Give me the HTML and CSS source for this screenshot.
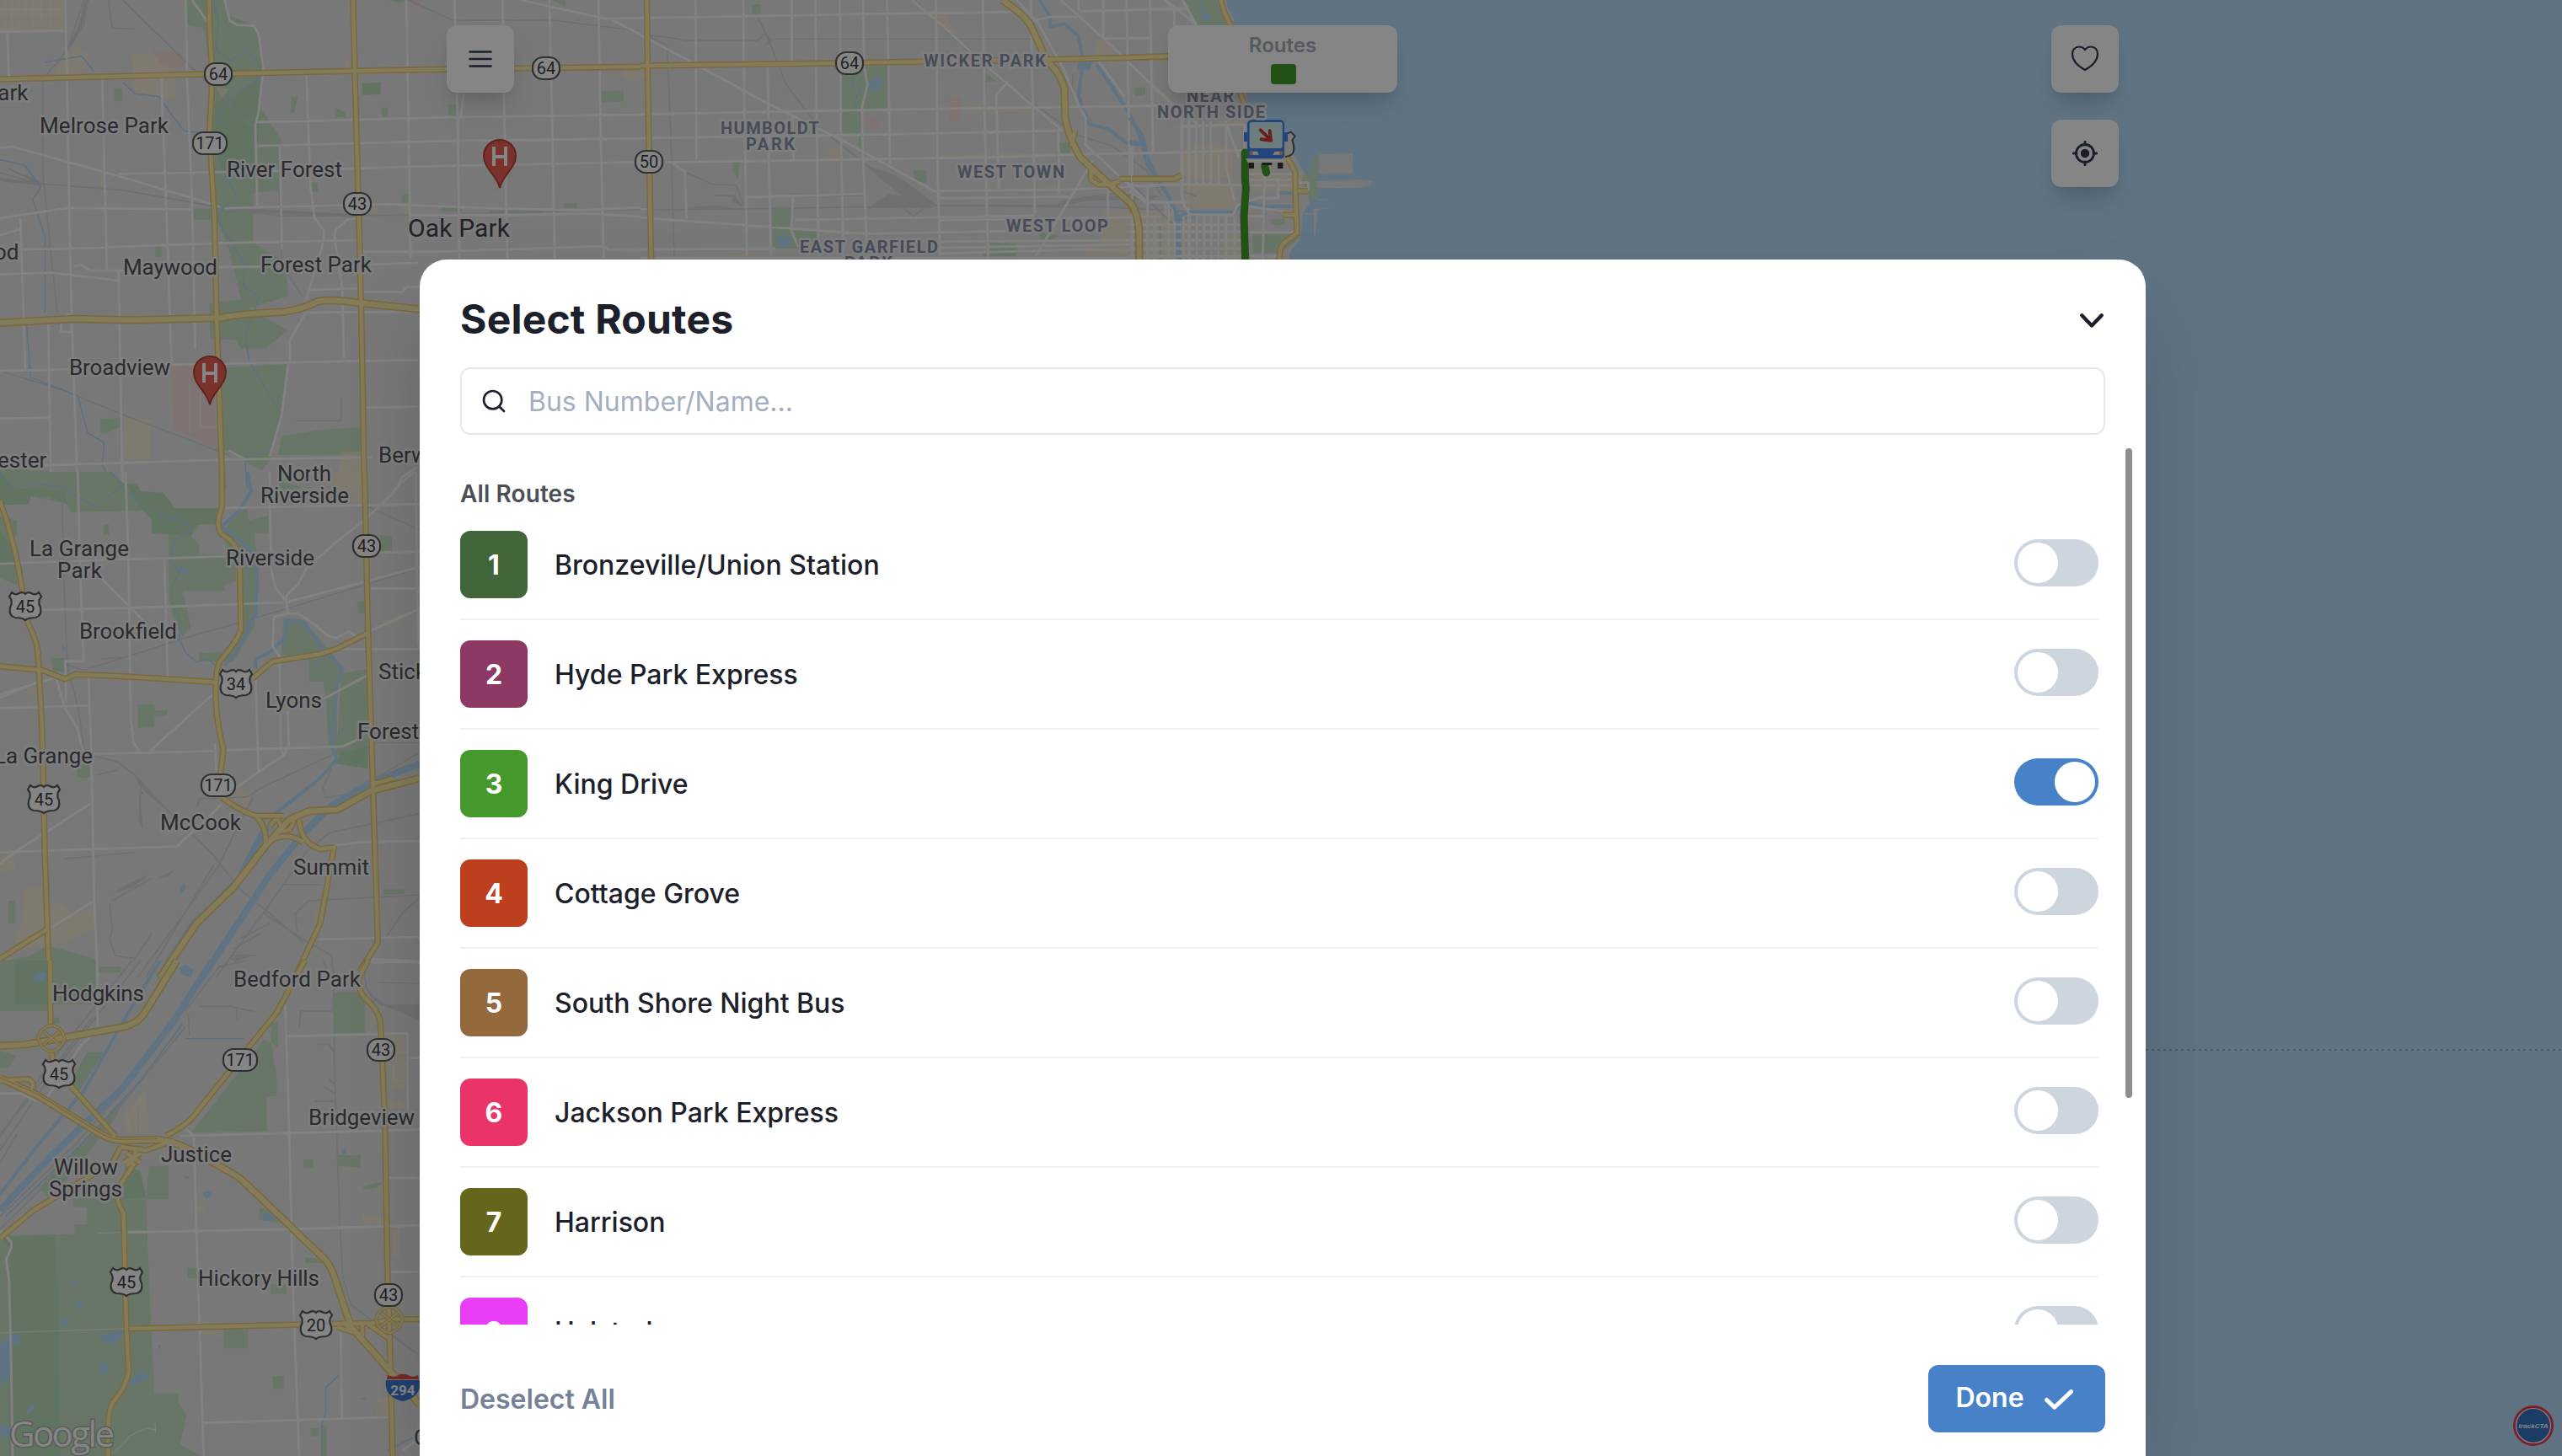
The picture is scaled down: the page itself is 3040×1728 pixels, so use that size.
FILE: index.html
```html
<!DOCTYPE html>
<html lang="en">
<head>
<meta charset="utf-8">
<title>trackCTA</title>
<link rel="stylesheet" href="styles.css">
</head>
<body>
<div class="app">
<svg class="map" viewBox="0 0 3040 1728" aria-label="Map of Chicago">
  <defs>
    <g id="us"><path d="M-16-16Q-12-12-7-15-3-17 0-14 3-17 7-15 12-12 16-16L19-11Q14-5 18 2 20 12 12 14 4 14 0 17-4 14-12 14-20 12-18 2-14-5-19-11Z"/></g>
    <g id="oval"><rect x="-16" y="-13" width="32" height="26" rx="12"/></g>
    <g id="wide"><rect x="-20" y="-13" width="40" height="26" rx="12"/></g>
    <g id="pin"><path class="pin" d="M0 29C-3 14-19 6-19-9A19 19 0 0 1 19-9C19 6 3 14 0 29Z"/><path class="pin-h" d="M-7-20V3M7-20V3M-7-8H7"/></g>
    <g id="clover"><path d="M-16 0Q-12-14 0-15 12-14 16 0 12 14 0 16-12 14-16 0ZM-10-8L10 8M10-8L-10 8"/></g>
  </defs>
  <rect class="land" width="3040" height="1728"/>

  <!-- Oak Park and western suburbs -->
  <g transform="scale(.4847 .3699)">
    <path class="park" d="M456 0H550L560 50 628 85 645 220 635 340 690 450 680 610 620 620V780L700 840 705 950 610 990 705 1060 650 1118H590L575 1090H515L512 975 590 960 560 800 530 700 520 300 500 90 456 80ZM545 1180L705 1168 690 1330 660 1480 640 1510 545 1440ZM690 1400L780 1380 890 1370V1460H680ZM470 670H530V705H470ZM0 1505L120 1510 115 1568H0ZM280 285H300V325H280ZM712 310H730L720 362H712ZM820 345L845 360V375H822ZM935 345H950V375H935ZM1098 335H1122V370H1098ZM760 585H778V615H760ZM985 625H1000V650H985ZM1470 293L1527 290V325L1472 330ZM1380 652H1412V668H1380ZM1080 665H1130V680H1080ZM1200 675H1330V685H1200ZM380 790H395V825H380ZM245 1345L300 1340V1365L260 1390H245ZM950 0H1000L980 10ZM1350 0H1385V22Z"/>
    <path class="park-dark" d="M525 330L570 310 630 250 640 330 625 540 540 545 522 420ZM887 267L932 265V303L887 305Z"/>
    <path class="shop" d="M0 0H158V98L0 100ZM160 170L190 150 213 175V235L130 240ZM322 165L370 180 430 220V315L330 300ZM530 280L560 285 540 320ZM845 190H858V235H845ZM1523 225H1568V252L1526 250ZM140 510L250 540 260 610H250L245 550ZM915 640L925 685H835V660ZM980 655L1020 645 995 685ZM835 1450H885V1568H820ZM303 1340L368 1345V1475H300Z"/>
    <path class="med" d="M370 158L440 170 460 210 430 220 400 215ZM420 1175L520 1165 532 1440 425 1375ZM1000 0H1035L1025 25ZM1210 560L1222 610 1210 612Z"/>
    <path class="rail" d="M215 0L205 80 165 160 105 255V560L130 880 140 1000M205 0L165 160M265 0L275 90 330 93M300 0L460 205 620 410 680 500 690 850 740 950M0 580L105 590 300 610 560 670 690 693 1000 690 1568 672M0 555L100 590 20 540M0 1190L150 1250 300 1330 560 1460M1000 0L1110 66 1350 64 1568 100M835 1275V1350H725M105 590L60 560"/>
    <path class="rail-wide" d="M212 0L195 90 170 150M0 575L105 592M560 672L870 692"/>
    <path class="stream" d="M520 0L535 60 530 160 560 195 600 165 640 210 630 260 560 310 530 400M530 650L535 710 600 850 595 920 635 950 600 1080 610 1160 690 1330 660 1440 600 1480 605 1568M110 200L200 180 230 230M300 263L330 300 390 310 410 350 450 420 520 430M0 512L60 530 100 600 80 640 110 760V1000M65 1040L75 1210 190 1270 215 1390 255 1420 250 1490 280 1568M545 545L580 630 530 690"/>
    <path class="road" d="M0 102L158 98M160 0L165 330 170 700 175 1000 190 1568M18 105L22 250M455 0L458 250 470 640 478 1120M250 255L262 870M395 250L408 700 420 1170M750 235L760 600 770 700 793 740 793 770 750 960M470 0L508 70M550 0L562 65 580 80 622 83 633 110 645 220 633 360 625 400 630 660M995 0L1000 400 1005 830M1113 0L1120 370 1125 830M1135 300L1128 375M1230 0L1235 400 1242 830M1345 0L1352 400 1358 830M1465 0L1470 400 1478 830M628 392L1110 376 1568 368M628 468L1100 452 1568 444M290 558L640 550 1000 535 1568 520M0 475L30 470 290 565 470 635 540 665M0 700L170 667 470 672M550 668L720 662 950 655 1200 668 1420 675 1568 665M1000 690L1250 690 1440 685 1568 695M0 802L175 797 540 780 875 770M885 808L1060 808 1480 790 1490 802 1568 803M530 857L700 855M890 850L1025 843M0 880L125 875 290 900M180 853L200 850 220 868 300 868M760 930L888 925 890 937 985 937 995 922 1025 920M750 1003L1025 1000M820 770V740L850 705 875 700M820 770L838 925 842 1150M0 1190L170 1185M420 1170L890 1158 1025 1155M0 1343L125 1340M890 1308L1025 1305M60 1495L540 1475 910 1467M290 870L300 1568M118 1040L125 1568M50 700L62 1190M0 755L50 735M685 470L690 800M705 1170L690 1330 660 1465M750 1000L710 1090V1170M560 1445L600 1475M970 1568L985 1530 1020 1500M1275 0L1480 60 1568 58M1500 65L1568 110M145 1065H175V1035M150 1065V1030L170 1005"/>
    <path class="lane" d="M12 0V95M28 0V95M45 0V95M62 0V60M80 0V95M100 0V60M125 0V95M0 30H158M0 48H158M465 1210V1390M490 1200V1370H530V1290"/>
    <g class="case"><path d="M0 254L500 238 1000 224 1568 214M512 0L513 90 518 200V300L513 420 518 540 525 700 530 1000 535 1200 540 1400 545 1568M864 0L870 300 880 760 886 1100 892 1568"/></g>
    <g class="case-wide"><path d="M0 1036L180 1023 330 1027 540 1020Q580 1007 700 1000 745 990 780 966 820 960 880 972L1100 1002"/></g>
    <g class="major"><path d="M0 254L500 238 1000 224 1568 214M512 0L513 90 518 200V300L513 420 518 540 525 700 530 1000 535 1200 540 1400 545 1568M864 0L870 300 880 760 886 1100 892 1568"/></g>
    <g class="major-wide"><path d="M0 1036L180 1023 330 1027 540 1020Q580 1007 700 1000 745 990 780 966 820 960 880 972L1100 1002"/></g>
  </g>

  <!-- La Grange to Summit -->
  <g transform="translate(0 560) scale(.33333 .38265)">
    <path class="park" d="M0 0H400L440 35H490L500 60 580 70 620 112 780 112V160H715L680 200 710 225V255L840 260V340L800 350V370H650L680 480 650 510 630 480 600 400V195L540 190V150L510 120 250 125 240 100 110 75 100 100 0 103ZM840 120L880 115 885 150 955 135V190H905L920 300 905 480 830 590H790L710 585V562L790 560 860 490V310L790 200ZM0 140L60 150V195L30 205 60 290V350L0 330ZM1010 458L1080 460 1180 560 1220 610 1200 680V880L1170 840 1160 700 1150 650H1100V580L1000 570ZM1215 625L1310 610V920L1195 905ZM490 722L550 720V740L595 738V755L550 760V793H490ZM180 577H228V620H190ZM272 905H320V948H275ZM1355 195L1395 200V245L1355 248ZM1365 1295H1440V1310H1365ZM30 1330H55V1400H30ZM0 1520L110 1500 170 1470 340 1510 345 1568H0ZM350 1535H430V1550H350ZM368 163H388V195H368ZM990 30L1070 45 1060 55H1000ZM1270 405L1300 400V440H1275Z"/>
    <path class="park-dark" d="M0 0L50 50 230 60 240 100 170 75H110L100 100 0 103ZM450 35L490 45 500 60 580 65 625 115 780 115V160L690 165 680 200 600 192H540V150L480 90ZM0 185L60 250V280H0ZM1215 870L1310 850V920L1195 905ZM20 1520H170V1568H20Z"/>
    <path class="shop" d="M1130 0H1285L1310 100H1220V60L1130 35ZM100 670H130V695L100 690ZM740 660L770 640V680ZM1350 465L1440 435 1460 440 1390 480ZM0 1190L50 1190 55 1230 0 1245ZM85 1290L150 1285V1340H220L260 1370 335 1355V1420L180 1475 60 1475 50 1440 80 1400ZM800 990H900L880 1040ZM1115 1355H1130V1395H1115ZM970 580H1000V605H970ZM130 597H150V640H130ZM160 1140H175V1230H165Z"/>
    <path class="rail" d="M218 0L230 400 240 600 280 740 300 870M240 600L300 615 500 560 640 520 1000 430 1488 300M360 580L440 575M330 880L420 900 480 940 540 1000 760 1190 860 1300 960 1370 1080 1460M480 940L620 1070M500 980V1090L510 1105M700 1040L710 1015 880 1008 930 980 1200 870 1290 840H1494M1180 920L1150 980 1160 1010 1240 1000 1494 870M490 1568L780 1220 830 1130 900 1010M520 1568L760 1220M1494 1060L1170 1120 1090 1180 960 1340 800 1530 770 1568M1000 1280H1140M960 1340L940 1370 1080 1450 1180 1500 1190 1568M1060 1430L1050 1370 1100 1330 1494 1312M1370 1450L1430 1370 1494 1320M400 1330L540 1260M390 1340L400 1420 390 1450 410 1500 480 1510 540 1430M230 1200L480 1180M340 940L420 925M850 1450L960 1400M830 1480L930 1430M830 1500H910M1290 100L1494 180"/>
    <path class="rail-fill" d="M480 940L600 1050 620 1070 500 980ZM495 990L510 1105 495 1080ZM400 1310L450 1280 530 1250 470 1290ZM560 1260L620 1235 600 1255ZM820 1510L870 1495 900 1500 840 1520Z"/>
    <path class="stream" d="M0 0L40 50 120 35 230 50 290 85 345 107 380 80 435 45 395 0M455 60L500 105 600 140 670 160 680 190 620 210 605 280 640 310 610 360V400L640 460V520L660 560 700 590 740 580 780 610M225 540V560M1225 780L1218 810M500 985L510 1000"/>
    <path class="river" d="M880 0L895 60 850 120 790 170 850 210 900 250 915 320 910 440 860 530 800 600M910 610V580L960 560 1020 510 1015 460 1080 465 1150 550 1220 610 1200 660 1185 780V860L1200 890 1140 950 980 1060 880 1230 700 1390 560 1568"/>
    <path class="river-wide" d="M1494 905L1320 965 1180 1035 1080 1120 960 1250 870 1370 720 1568M940 1110L840 1280 690 1400 600 1520"/>
    <path class="water" d="M640 290L670 305 665 320 640 315ZM770 312L783 315 775 322ZM1115 580L1140 595 1130 612ZM640 1290L655 1273 663 1290 640 1312ZM640 1540L660 1527 690 1545 680 1568 650 1560ZM1000 1110L1040 1095 1030 1115ZM120 1558L150 1548 165 1568H120Z"/>
    <path class="road" d="M277 0L285 300 298 588H232L235 715M447 0L458 300 465 760 475 840 495 865M0 285L460 270 590 268 805 262M150 428L460 422 800 412 1010 405M360 330L515 465M585 268L597 635M0 690L190 640M0 733L315 725M315 635L325 860 335 1320 348 1568M200 640L230 730 275 795 295 865M330 875L760 866M790 863L1220 852 1275 830M535 865L770 680M765 840L770 930M800 112L1494 100M960 0L965 300 980 360 1018 400 1025 440 975 450 970 540 995 570 1000 860M1475 0L1420 40 1400 65 1310 140 1180 230 1090 300 1060 350 1020 385 1018 405 1310 338 1494 295M1025 440L1060 440 1100 460 1170 510 1200 515 1240 495 1270 510M1310 495L1494 425M1200 550H1494M1320 362H1494M1350 250L1494 247M1150 705L1310 630M910 640L920 930M840 980L920 930 1010 880 1028 850 1025 740M1010 880L1000 860M0 1180L330 1170 630 1162 790 1030M0 1215L70 1170 320 1030M180 1415L335 1330M1195 1158L1290 1148 1494 1145M1130 1450L1494 1443M1310 1510L1494 1518M0 700L140 650M1480 0L1488 540"/>
    <g class="case"><path id="roadsB" d="M0 90Q55 220 80 370L100 470Q130 520 135 560L150 800 160 1200 175 1568M0 603L150 615 230 643 270 628 460 635 765 652M1298 0L1310 500 1325 900 1345 1460 1280 1550M900 640L970 588 1140 565 1200 548 1310 500M790 0V110Q760 180 800 200 850 225 853 280L858 490Q840 530 790 580 765 600 768 700 770 780 795 860L785 940M790 1010Q850 1050 910 1067H1010M910 1067Q950 1100 945 1150M0 1510L165 1420M1190 1160L1140 1400 1050 1568M1065 1080Q1070 1150 1140 1170L1190 1165M950 1150Q1020 1110 1080 1150M960 1100Q990 1060 1000 1100 990 1120 1030 1110 1050 1090 1040 1070M1320 970L1400 950"/></g>
    <g class="case-wide"><path d="M1494 950L1320 990 1200 1048 1100 1052 1030 1078 950 1155 830 1290 700 1400 570 1568"/></g>
    <use class="major" href="#roadsB"/>
    <g class="major-wide"><path d="M1494 950L1320 990 1200 1048 1100 1052 1030 1078 950 1155 830 1290 700 1400 570 1568"/></g>
  </g>

  <!-- Willow Springs to Bridgeview -->
  <g transform="translate(0 1140) scale(.33333 .375)">
    <path class="park" d="M0 0H350L345 50 345 138H190V180H210V200H170L168 160H0ZM0 285L60 300 30 340H0ZM350 20H430V38H350ZM1190 100H1300V230H1190ZM680 545L940 250 965 260V195H990V275L965 260 985 370V430H950V540ZM310 290L370 290 270 430 240 400ZM140 720L440 440 410 500 180 760ZM530 650H600V755H520L535 1100 550 1370H635V1400L665 1440 640 1530 715 1568H0V870L265 865V835H310V780H260V750H520ZM1080 630H1115V655H1080ZM1205 615H1283V655L1205 650ZM1290 715L1360 700V715L1300 725ZM925 785L1000 790 990 830 920 820ZM1085 940L1150 945V958H1090ZM795 1165H882V1227H797ZM970 1315H1010V1355H972ZM665 972H700V1005H668ZM965 1025H1020V1055H965ZM1105 1480H1135V1505H1105ZM1145 1470H1163V1568H1145Z"/>
    <path class="park-dark" d="M50 0H170V138H50ZM0 875L195 870 210 1100 215 1568H30L35 910ZM445 650L500 665 520 750 440 755Z"/>
    <path class="shop" d="M1370 235L1445 240V410H1390ZM1370 440L1445 445V470H1370ZM1290 803L1365 805V835L1290 830ZM1395 850H1420V935H1400ZM1345 710H1390V740H1345ZM690 1140H735L790 1175V1190L720 1185ZM1340 1380H1385V1440H1340ZM700 775H730V795H705ZM440 480L520 410 530 540H440ZM1320 165L1335 170V210H1320Z"/>
    <path class="rail" d="M500 0L200 340 0 600M470 0L180 320 0 560M330 180L100 440 0 550M60 550L0 640M660 210L300 600 150 720 0 850M580 240L470 380 270 580 0 810M880 0L780 20 660 160M710 145H820L910 163M840 150L845 190M1180 0L1190 50 1185 160H1070L1065 210M670 170L675 240M1150 0L1190 80V330L1210 840 1220 1000 1250 1090 1494 1250M1300 20Q1290 110 1360 140L1494 165M1300 80Q1340 150 1494 175M1340 70L1494 72M1130 265L1170 265 1190 290M1120 445H1190M1170 375L1190 390M1155 400L1190 420"/>
    <path class="rail-fill" d="M1360 140L1494 138V190L1430 165Z"/>
    <path class="lane" d="M0 1178L440 1165M350 863L440 860M1375 250H1445M1375 290H1445M1375 330H1445M1400 240V380H1445M460 540V500L500 430V540ZM470 520H505M485 460V550"/>
    <path class="river" d="M570 0L440 190 300 410 120 600 0 740"/>
    <path class="river-wide" d="M755 0L620 190 440 400 180 620 0 790"/>
    <path class="stream" d="M650 200L500 380 280 590 20 810M660 247H870M1205 1315L1160 1350V1430L1145 1470V1568M1494 1500L1380 1550"/>
    <path class="water" d="M115 50L140 35 165 40 155 65 120 65ZM640 30L660 15 685 30 680 50ZM720 735L740 728 758 740 735 755ZM930 810L960 795 1000 810 970 822H935ZM1215 600L1228 592 1235 610 1220 612ZM655 680L675 685 665 692ZM790 512L800 515 795 525ZM265 1080L290 1075 300 1090 280 1105ZM215 1125L248 1140 240 1155 215 1158ZM0 1220L30 1180 70 1185 75 1210 40 1220 30 1330 0 1340ZM350 1185L440 1170 430 1195 400 1215 370 1205ZM355 1280L375 1270 388 1290 375 1312 355 1305ZM465 1330L500 1295 540 1325 500 1330 460 1350ZM90 1435L110 1405 130 1410 95 1440ZM0 1470L40 1475 30 1505 5 1510ZM1265 1388L1300 1383V1390ZM240 1020L270 1008 275 1025ZM562 1215L572 1218 565 1232ZM485 1080L498 1075 492 1085ZM940 290L955 283V290Z"/>
    <path class="road" d="M345 0L348 210M170 430L290 265 325 240M0 420H70L130 445M1015 140L1025 400 1045 1100 1065 1568M1020 240L1450 230 1452 520M1460 308H1494M640 555L1030 546 1494 535M665 535L690 555 700 880 725 1568M1380 688H1494M455 860L1030 850 1494 838M1385 985H1494M725 1463L1390 1445M1195 1158L1213 1180 1217 1445M0 855L40 890V910L22 945 32 1010 38 1200 45 1568M1320 5H1494M1435 1550L1494 1510"/>
    <path class="lane" d="M400 1560L440 1530 460 1505 520 1480 553 1485V1465V1495"/>
    <g class="case"><path id="roadsC" d="M178 0L180 200M183 290L190 320M250 395L410 555M1085 0L985 165 700 480Q670 520 590 555M1310 0L1280 50Q1270 90 1300 120 1355 160 1355 210L1370 500 1380 1000 1385 1120 1390 1300 1398 1568M0 880L120 790 400 640 430 590M480 640L420 720Q410 760 440 800L450 1160 458 1300Q450 1350 400 1400 380 1430 385 1568M460 1165L1070 1152M1180 1150L1330 1147 1400 1135 1494 1135M430 590L520 600 620 570M450 610L500 640M480 590Q490 630 450 650M440 640L500 610M0 380L100 375Q130 390 110 405M1200 1160L1290 1185V1150M1220 1145L1270 1180M1310 1150L1390 1200"/></g>
    <g class="case-wide"><path id="hwyC" d="M0 270L90 266 440 210Q490 200 515 165L630 0M0 372L130 425 360 550Q400 570 440 570L560 567Q620 570 700 610L830 675Q850 685 880 710L1150 940Q1175 960 1190 1000L1250 1160 1400 1310 1494 1405"/></g>
    <use class="major" href="#roadsC"/><use class="major-wide" href="#hwyC"/>
    <path class="ramp" d="M0 370L130 421 360 547Q400 567 440 567L560 564"/>
  </g>
  <g class="case clover"><use href="#clover" x="61" y="1232"/><use href="#clover" x="462" y="1566"/></g>
  <g class="major clover"><use href="#clover" x="61" y="1232"/><use href="#clover" x="462" y="1566"/></g>

  <!-- West side neighbourhoods -->
  <g transform="translate(760 0) scale(.4209 .33333)">
    <path class="park" d="M566 235H697V386H620V473H568V390ZM370 742H428L430 820H500L495 885H372ZM315 15H340V50H315ZM260 578H280L275 640 260 610ZM770 605H806V655L772 640ZM975 260L1005 290H975ZM1180 508H1210V545H1182ZM1395 315L1422 310 1420 335 1395 342ZM985 862L1060 870V922H965V905H985ZM1125 825L1180 840 1130 870ZM616 410H622V530H616ZM372 137H1100V141H372ZM1530 0H1568V90ZM415 688H630V700H430Z"/>
    <path class="shop" d="M790 30L850 40 895 125 870 110 830 70ZM900 375L1100 380V400L900 395ZM850 550L1180 542V555L960 570 850 565ZM530 525L560 530 572 560H535ZM1285 140H1310L1330 190 1335 240 1280 190ZM1300 750H1470V922H1255V880L1300 870ZM1520 530L1560 520 1568 610H1520ZM1280 30H1375V42H1280ZM250 905L320 900 340 922H250ZM0 235H10V280H0ZM1080 330L1100 360 1080 360Z"/>
    <path class="med" d="M870 348L903 345V430L870 432ZM640 405L660 415 680 440 670 460 650 450 632 450Z"/>
    <path class="rail" d="M0 125L60 130 130 144H330L350 120 370 145 350 160M315 15L370 170 410 300 500 450 640 590 830 730M20 128L75 160 85 460 95 922M130 615L200 655 270 660 290 730M210 695L270 698M0 748L380 742 840 732 1320 738 1568 755M640 740L830 730M740 740L770 770 800 740M780 10L930 190 1040 310 1110 370 1230 480 1330 520 1430 610 1470 700M1220 260L1215 330 1280 450M1180 720L1320 690 1460 700"/>
    <path class="rail-fill" d="M630 585L710 620 740 640 835 730 820 740H640L700 690 740 700 680 640ZM120 740L210 730 260 740 210 748ZM260 690L290 735 260 720ZM845 728H1170L1250 700 1450 695V710L1260 715 1180 735H845Z"/>
    <path class="stream" d="M600 270L597 300 620 310 600 380"/>
    <path class="water" d="M642 300L655 280 682 275 680 310 660 328 642 320ZM1232 220H1275L1265 250H1232ZM383 845L400 835 430 850 410 882 388 875ZM1500 745L1530 780 1568 745V770L1520 790 1500 770Z"/>
    <path class="river" d="M1125 0L1155 60V95L1195 85 1235 130 1248 220M1245 245L1235 340 1260 440 1320 460 1370 510 1415 515 1430 590 1490 700 1510 770V922M1285 230L1330 310 1390 430 1415 515"/>
    <path class="road" d="M0 64L290 58 630 50 1095 42M1240 40L1540 32M155 0L158 570M290 0L292 320 300 922M427 0V220M493 0L497 460 502 922M562 0L565 480 572 922M628 0L630 235 640 300 625 380V480L632 690 640 922M695 0L700 300 703 585M833 0L838 640 845 922M965 0L970 400 980 922M1100 0L1108 500 1112 760M1235 0V40M1305 0V130M1370 0L1380 660M1438 90L1445 540M358 235L362 560 368 922M428 405L432 570M0 125L150 225 360 370 570 500 835 685M0 407L570 393 1100 382 1568 375M0 492L500 483 1190 465M70 578L500 570 970 560 1280 548 1568 542M300 702L630 690M840 680L1200 675 1568 655M840 706L1210 700M435 783L1110 768M0 775L640 833 1110 820M845 785L1470 772M845 860L1390 855M845 882L1390 870M845 903L1250 888 1390 892M0 888L380 885M0 918L1390 918M765 0L850 90 970 230 1100 370 1190 465M1035 290L1003 340 1010 670M1060 0L1120 80 1190 240 1230 360 1255 420V520M1185 0L1300 130 1370 215 1500 370 1568 440M1475 0L1568 85M1110 75L1150 60H1230M1310 137H1438M1290 215L1365 345M1250 510L1430 720M1275 570L1110 922M90 580L125 610 130 780M430 700L425 820 445 880M1178 460L1180 690M1318 670V770M1428 675V720H1568M1390 800H1568M1390 825H1568M1390 855H1568M1390 885H1568M1390 912H1568M1430 790V922M1455 790V922M1480 720V922M1500 720V922M1525 390V700M1545 390V922M0 745H20M1530 450H1568"/>
    <g class="case"><path id="roadsD" d="M18 0L20 240 25 600 30 922M0 234L500 226 1140 212 1500 202M1350 637H1500L1525 625M1270 600V640L1290 657H1320L1350 645M1225 465L1215 520"/></g>
    <g class="case-wide"><path id="hwyD" d="M1020 0Q1080 50 1100 90L1145 215Q1190 270 1195 320L1197 420Q1210 500 1240 560L1290 620 1370 710Q1405 760 1405 840V922"/></g>
    <use class="major" href="#roadsD"/><use class="major-wide" href="#hwyD"/>
  </g>

  <path class="water" d="M1455 0L1459 22 1466 30 1480 120 1503 142 1528 157 1536 185 1547 204 1556 218 1554 240 1546 253 1543 284 1530 300V340L2400 760V1728H3040V0Z"/>

  <!-- Downtown -->
  <g transform="translate(1340 0) scale(.33333)">
    <path class="park" d="M200 0H310L345 90H240ZM18 315L57 310V335L20 343ZM640 620L655 565 675 550V620H665L672 710H640L638 680 600 625ZM440 835H605L610 845 540 900H440ZM505 780H553V800H505Z"/>
    <path class="shop" d="M190 530L300 510 370 530V630H190ZM200 650H380V740H200ZM50 760H160V924H50ZM330 830H420V924H330ZM310 430H410V450H310ZM440 590L500 590 530 620 620 610 610 680H440ZM350 30L375 70 345 90ZM560 900V920H545V895Z"/>
    <path class="land" d="M675 550L795 546 797 617 677 620ZM665 645L820 640 862 645V660L820 668 668 670ZM610 758L655 760 652 745 742 735 670 748 662 840 657 838V765L610 762ZM670 710H703V713H670Z"/>
    <path class="water" d="M250 15L258 10 265 40 290 55 285 70 263 75Z"/>
    <path class="river" d="M0 420L45 480 68 570 110 650 150 720 172 770M0 505L60 515M170 775L210 755H370L420 720 480 735H590M172 770L180 924M535 688H590"/>
    <path class="breakwater" d="M730 408L1003 573V680M1003 755V880M545 420L605 410"/>
    <path class="rail" d="M190 500V680L240 700M0 645L110 755 200 840M110 800V924"/>
    <path class="road" d="M0 135H72M73 0L85 540M0 35L205 28M160 30V90M130 0L240 90M190 0L240 90M0 225L150 370 190 430M0 378L400 372M0 547L190 542 400 535M190 450L410 443M0 662L190 655 400 660M0 680L60 720H190L215 765H370L385 730 475 700M187 400L190 720M213 430V655M238 430V655M263 430V655M290 430V655M345 430V600L375 715M318 550V655M345 440L390 560M0 772H110M10 520V924M65 670V924M90 770V924M140 720V924M162 790V924M193 770V924M215 770V924M240 770V924M266 770V924M292 770V924M317 770V924M345 770V924M375 770V924M0 800H400M0 825H400M0 855H400M0 885H400M0 912H400M430 620H585M430 640H585M430 660H585M485 590L480 690 475 924M530 640V705H455M600 650H637V675H600M420 735L590 757M425 827H585M425 770H480M430 912H540M410 440V924"/>
    <g class="case"><path id="roadsE" d="M325 0Q345 70 365 95M395 330L410 370 450 420 550 540 590 610 592 700 597 830 545 870Q535 885 535 924M10 637H160L185 625M0 205L140 200M545 765H590M600 680H635"/></g>
    <g class="case-wide"><path id="hwyE" d="M0 715Q35 760 35 840V924"/></g>
    <use class="major" href="#roadsE"/><use class="major-wide" href="#hwyE"/>
    <path class="route" d="M412 543V640L415 670 408 770 413 924M482 590L488 615"/>
    <path class="bus-wifi" d="M550 480L575 470 590 485 580 500Q600 555 555 558"/>
    <path class="bus-tire" d="M425 575H444V600H425ZM528 575H547V600H528ZM470 570H508V588H475Z"/>
    <path class="bus-body" d="M408 471H424V504H408ZM548 471H564V504H548Z"/>
    <rect class="bus-body" x="420" y="426" width="132" height="142" rx="16"/>
    <rect class="bus-glass" x="428" y="435" width="117" height="93" rx="6"/>
    <path class="bus-bumper" d="M414 565H558L552 579H422Z"/>
    <path class="bus-bumper" d="M429 539H455L462 551H429ZM545 539H518L510 551H545Z"/>
    <path class="bus-lamp" d="M429 539H440V551H429ZM534 539H545V551H534Z"/>
    <path class="bus-arrow" d="M467 463L505 500M500 466L504 500 470 496"/>
  </g>
  <path class="state-line" d="M2546 1246H3040"/>

  <g class="pins"><use href="#pin" x="593" y="194"/><use href="#pin" x="249" y="451"/></g>

  <g class="shield">
    <use href="#oval" x="259" y="88"/><use href="#wide" x="249" y="170"/><use href="#oval" x="424" y="242"/><use href="#oval" x="648" y="81"/><use href="#oval" x="770" y="192"/><use href="#oval" x="1008" y="75"/><use href="#oval" x="435" y="648"/><use href="#wide" x="259" y="932"/><use href="#wide" x="285" y="1258"/><use href="#oval" x="452" y="1246"/><use href="#oval" x="461" y="1537"/>
    <use href="#us" x="30" y="719"/><use href="#us" x="280" y="811"/><use href="#us" x="52" y="948"/><use href="#us" x="70" y="1274"/><use href="#us" x="150" y="1521"/><use href="#us" x="375" y="1572"/>
  </g>
  <path class="inter-blue" d="M458 1638H498C500 1652 492 1660 478 1663 464 1660 456 1652 458 1638Z"/><path class="inter-red" d="M460 1632Q466 1635 471 1633 475 1630 478 1631 482 1630 486 1633 491 1635 496 1632L497 1637H459Z"/>
  <g class="shield-text">
    <text x="259" y="95">64</text><text x="249" y="177">171</text><text x="424" y="249">43</text><text x="648" y="88">64</text><text x="770" y="199">50</text><text x="1008" y="82">64</text><text x="435" y="655">43</text><text x="259" y="939">171</text><text x="285" y="1265">171</text><text x="452" y="1253">43</text><text x="461" y="1544">43</text>
    <text x="30" y="727">45</text><text x="280" y="819">34</text><text x="52" y="956">45</text><text x="70" y="1282">45</text><text x="150" y="1529">45</text><text x="375" y="1580">20</text>
    <text class="inter-text" x="478" y="1656">294</text>
  </g>

  <g class="town">
    <text x="-19" y="119">Park</text><text x="47" y="158" textLength="153">Melrose Park</text><text x="269" y="210" textLength="137">River Forest</text>
    <text x="146" y="326" textLength="112">Maywood</text><text x="309" y="323" textLength="132">Forest Park</text><text x="-7" y="308">od</text>
    <text x="82" y="445" textLength="120">Broadview</text><text x="-3" y="555">ester</text><text x="449" y="549">Berwyn</text>
    <text x="329" y="571" textLength="64">North</text><text x="309" y="597" textLength="105">Riverside</text>
    <text x="35" y="660" textLength="118">La Grange</text><text x="68" y="686" textLength="53">Park</text><text x="268" y="671" textLength="105">Riverside</text>
    <text x="94" y="758" textLength="116">Brookfield</text><text x="449" y="806">Stickney</text><text x="315" y="840" textLength="67">Lyons</text><text x="424" y="877">Forest View</text>
    <text x="-7" y="906" textLength="117">La Grange</text><text x="190" y="985" textLength="96">McCook</text><text x="348" y="1038" textLength="90">Summit</text>
    <text x="277" y="1171" textLength="151">Bedford Park</text><text x="62" y="1188" textLength="109">Hodgkins</text><text x="366" y="1335" textLength="126">Bridgeview</text>
    <text x="191" y="1379" textLength="84">Justice</text><text x="64" y="1394" textLength="76">Willow</text><text x="58" y="1420" textLength="87">Springs</text>
    <text x="235" y="1526" textLength="144">Hickory Hills</text><text x="491" y="1715">Chicago</text>
    <text class="city" x="484" y="281" textLength="121">Oak Park</text>
  </g>
  <g class="hood">
    <text x="1096" y="79" textLength="145">WICKER PARK</text><text x="855" y="159" textLength="117">HUMBOLDT</text><text x="885" y="178" textLength="58">PARK</text>
    <text x="1136" y="211" textLength="127">WEST TOWN</text><text x="1194" y="275" textLength="121">WEST LOOP</text><text x="949" y="300" textLength="164">EAST GARFIELD</text><text x="1002" y="319" textLength="57">PARK</text>
    <text x="1408" y="121" textLength="56">NEAR</text><text x="1373" y="140" textLength="128">NORTH SIDE</text>
  </g>
  <text class="google" x="11" y="1717" textLength="125">Google</text>
  <circle class="logo" cx="3006" cy="1692" r="22"/><circle class="logo-line" cx="3006" cy="1692" r="20.5"/>
  <text class="logo-text" x="3006" y="1695">trackCTA</text>
</svg>

<header class="toolbar">
  <button class="tool"><svg width="28" height="20" viewBox="0 0 28 20"><path d="M1.5 1.5H26.5M1.5 10H26.5M1.5 18.5H26.5" stroke-width="2.6"/></svg></button>
  <div class="routes-card"><span class="routes-title">Routes</span><span class="swatch"></span></div>
  <div class="tool-stack">
    <button class="tool heart"><svg width="34" height="32" viewBox="0 0 34 32"><path d="M17 30C8 25 2 18 2 11A8 8 0 0 1 10 2.5C13.5 2.5 15.5 4 17 6 18.5 4 20.5 2.5 24 2.5A8 8 0 0 1 32 11C32 18 26 25 17 30Z" stroke-width="2.2"/></svg></button>
    <button class="tool"><svg width="30" height="30" viewBox="0 0 30 30"><circle cx="15" cy="15" r="10.5" stroke-width="2.8"/><path d="M15 1V5M15 25V29M1 15H5M25 15H29" stroke-width="2.8"/><circle class="dot" cx="15" cy="15" r="5.2"/></svg></button>
  </div>
</header>

<div class="overlay">
  <section class="modal">
    <div class="modal-head"><h1>Select Routes</h1><svg class="chevron" width="28" height="18" viewBox="0 0 28 18"><path d="M2.3 2.3L14 14.500 25.700 2.300"/></svg></div>
    <div class="search"><svg width="32" height="32" viewBox="0 0 24 24"><circle cx="11" cy="11" r="8"/><path d="M21 21L16.650 16.650"/></svg><input class="search-input" placeholder="Bus Number/Name..."></div>
    <div class="list">
      <h2>All Routes</h2>
      <div class="row"><span class="badge r1">1</span><span class="name">Bronzeville/Union Station</span><span class="switch"></span></div>
      <div class="row"><span class="badge r2">2</span><span class="name">Hyde Park Express</span><span class="switch"></span></div>
      <div class="row"><span class="badge r3">3</span><span class="name">King Drive</span><span class="switch on"></span></div>
      <div class="row"><span class="badge r4">4</span><span class="name">Cottage Grove</span><span class="switch"></span></div>
      <div class="row"><span class="badge r5">5</span><span class="name">South Shore Night Bus</span><span class="switch"></span></div>
      <div class="row"><span class="badge r6">6</span><span class="name">Jackson Park Express</span><span class="switch"></span></div>
      <div class="row"><span class="badge r7">7</span><span class="name">Harrison</span><span class="switch"></span></div>
      <div class="row"><span class="badge r8">8</span><span class="name">Halsted</span><span class="switch"></span></div>
      <span class="scroll-thumb"></span>
    </div>
    <footer class="modal-foot"><button class="deselect">Deselect All</button><button class="done">Done<svg width="34" height="24" viewBox="0 0 34 24"><path d="M2.600 12.500L11.800 21.300 31.500 2.600"/></svg></button></footer>
  </section>
</div>
</div>
</body>
</html>
```
FILE: styles.css
```css
* { box-sizing: border-box; }
body { margin: 0; font-family: Inter, "Liberation Sans", sans-serif; color: #1b202b; }
button { border: 0; margin: 0; padding: 0; background: none; font: inherit; }
.app { position: relative; width: 3040px; height: 1728px; overflow: hidden; }
.map { position: absolute; inset: 0; width: 100%; height: 100%; }

/* Map layers */
.map path, .map g, .map use { vector-effect: non-scaling-stroke; }
.land { fill: #e6e6e6; }
.water { fill: #b8ddfc; }
.park { fill: #c8e3c5; }
.park-dark { fill: #bbdfbb; }
.shop { fill: #f5ebd2; opacity: .75; }
.med { fill: #f8d9d4; opacity: .75; }
.rail-fill { fill: #d5d7db; }
.rail, .rail-wide, .stream, .river, .river-wide, .road, .lane, .breakwater, .case, .case-wide, .major, .major-wide, .ramp { fill: none; stroke-linejoin: round; }
.rail { stroke: #d3d5d9; stroke-width: 1.6; }
.rail-wide { stroke: #d3d5d9; stroke-width: 4; }
.stream { stroke: #b4d7f5; stroke-width: 1.5; }
.river { stroke: #b8ddfc; stroke-width: 4; }
.river-wide { stroke: #b8ddfc; stroke-width: 8; }
.road { stroke: #f9f9f9; stroke-width: 2.8; }
.lane { stroke: #f2f2f0; stroke-width: 1; }
.breakwater { stroke: #c3d9ea; stroke-width: 1; }
.case { stroke: #ebca77; stroke-width: 7.5; }
.case-wide { stroke: #ebca77; stroke-width: 9.5; }
.major { stroke: #fbecac; stroke-width: 4.4; }
.major-wide { stroke: #fbecac; stroke-width: 6.2; }
.case.clover { stroke-width: 4; }
.major.clover { stroke-width: 2; }
.ramp { stroke: #ebca77; stroke-width: 1.2; }
.route { fill: none; stroke: #439d2d; stroke-width: 9; stroke-linecap: round; }
.state-line { stroke: #97acbb; stroke-width: 2; stroke-dasharray: 3 4; }
.shield { fill: #fff; stroke: #5b5d61; stroke-width: 2.2; }
.shield-text { font: 20px Roboto, sans-serif; fill: #3c3f44; text-anchor: middle; }
.inter-blue { fill: #407bd6; }
.inter-red { fill: #e0544c; }
.inter-text { fill: #fff; font-size: 17px; font-weight: 700; }
.pin { fill: #eb6057; stroke: #b7443b; stroke-width: 2; }
.pin-h { fill: none; stroke: #fff; stroke-width: 4; }
.town, .hood { paint-order: stroke; stroke: #f2f2f2; stroke-width: 5px; stroke-linejoin: round; }
.town { font: 26px Roboto, sans-serif; fill: #515359; }
.city { font-size: 30px; fill: #43404f; stroke: #ebebeb; }
.hood { font: 700 20px Roboto, sans-serif; fill: #8993ab; }
.google { font: 500 42px "Open Sans", "Liberation Sans", sans-serif; fill: #fff; paint-order: stroke; stroke: #aab3aa; stroke-width: 3px; }
.logo { fill: #3473c0; stroke: #ec3c52; stroke-width: 4; }
.logo-line { fill: none; stroke: #fff; stroke-width: 1.2; }
.logo-text { font: italic 700 8px "Liberation Sans", sans-serif; fill: #fff; text-anchor: middle; }
.bus-body { fill: #4385ee; }
.bus-glass { fill: #cdf0ee; }
.bus-tire { fill: #333; }
.bus-bumper { fill: #f6f6f6; }
.bus-lamp { fill: #ef9b63; }
.bus-arrow { fill: none; stroke: #c93f34; stroke-width: 4; stroke-linecap: round; stroke-linejoin: round; }
.bus-wifi { fill: #e9e9e9; stroke: #56585c; stroke-width: 2; }

/* Floating controls */
.toolbar { position: absolute; top: 0; left: 0; right: 0; display: flex; justify-content: space-between; align-items: flex-start; padding: 30px 526px 0 530px; }
.tool, .routes-card { background: #fff; border-radius: 12px; box-shadow: 0 20px 30px -6px rgba(0,0,0,.14), 0 8px 12px -4px rgba(0,0,0,.08); }
.tool { display: flex; align-items: center; justify-content: center; width: 80px; height: 80px; }
.tool svg { fill: none; stroke: #313b50; stroke-linecap: round; stroke-linejoin: round; }
.heart { padding-bottom: 2px; }
.tool .dot { fill: #313b50; stroke: none; }
.tool-stack { display: flex; flex-direction: column; gap: 32px; }
.routes-card { display: flex; flex-direction: column; align-items: center; gap: 7px; width: 272px; height: 80px; padding-top: 9px; }
.routes-title { font-size: 24px; line-height: 30px; font-weight: 600; color: #a3abb9; }
.swatch { width: 30px; height: 24px; margin-left: 2px; border-radius: 4px; background: #439d2d; }

/* Route picker */
.overlay { position: absolute; inset: 0; display: flex; justify-content: center; padding: 308px 0 0 4px; background: rgba(0,0,0,.48); }
.modal { display: flex; flex-direction: column; width: 2048px; height: 1420px; border-radius: 32px 32px 0 0; padding: 39px 48px 0; background: #fff; box-shadow: 0 50px 100px -24px rgba(0,0,0,.25); }
.modal-head { display: flex; align-items: center; justify-content: space-between; height: 64px; margin-bottom: 25px; padding-right: 2px; }
h1 { margin: 0; font-size: 48px; line-height: 64px; font-weight: 700; letter-spacing: .2px; }
.chevron { margin-top: 3px; fill: none; stroke: #1b202b; stroke-width: 4.4; stroke-linecap: round; stroke-linejoin: round; }
.search { display: flex; align-items: center; gap: 25px; height: 80px; flex: none; padding-left: 22px; border: 2px solid #e3e8ef; border-radius: 12px; }
.search svg { fill: none; stroke: #1b202b; stroke-width: 2; stroke-linecap: round; stroke-linejoin: round; }
.search-input { flex: 1; padding: 2px 0 0; border: 0; outline: 0; background: none; font: 32px/40px Inter, sans-serif; color: #1b202b; }
.search-input::placeholder { color: #a3afc0; opacity: 1; }
.list { position: relative; flex: none; height: 1056px; overflow: hidden; padding: 52px 40px 0 0; margin: 0 -32px 0 0; }
h2 { margin: 0 0 26px; font-size: 28px; line-height: 36px; font-weight: 600; color: #4b4f58; letter-spacing: .1px; }
.row { display: flex; align-items: center; gap: 32px; height: 106px; padding-bottom: 24px; margin-bottom: 24px; border-bottom: 2px solid #edf1f6; }
.badge { display: flex; align-items: center; justify-content: center; width: 80px; height: 80px; border-radius: 12px; color: #fff; font-size: 32px; font-weight: 700; }
.r1 { background: #416538; }
.r2 { background: #8c3a63; }
.r3 { background: #45982b; }
.r4 { background: #bc3f1e; }
.r5 { background: #93693d; }
.r6 { background: #ea3369; }
.r7 { background: #65661b; }
.r8 { background: #ea3df7; }
.name { flex: 1; font-size: 32px; font-weight: 500; }
.switch { display: flex; width: 100px; height: 56px; padding: 4px; margin-bottom: 4px; border-radius: 28px; background: #cdd5df; }
.switch::before { content: ""; width: 48px; height: 48px; border-radius: 50%; background: #fff; }
.switch.on { justify-content: flex-end; background: #4782c8; }
.scroll-thumb { position: absolute; top: 16px; right: 0; width: 8px; height: 771px; border-radius: 4px; background: #8e8e8e; }
.modal-foot { display: flex; align-items: center; justify-content: space-between; height: 80px; margin-top: 48px; }
.deselect { font-size: 32px; font-weight: 600; color: #748196; }
.done { display: flex; align-items: center; justify-content: center; gap: 24px; width: 210px; height: 80px; border-radius: 12px; background: #4782c8; color: #fff; font-size: 32px; font-weight: 600; padding: 0 6px 3px 0; }
.done svg { margin-top: 4px; fill: none; stroke: #fff; stroke-width: 5; stroke-linecap: round; stroke-linejoin: round; }
```
